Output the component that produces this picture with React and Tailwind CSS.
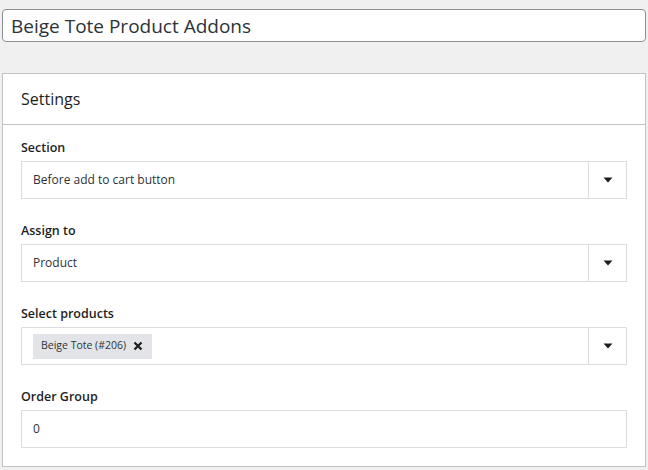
const FIELDS = [
  { label: 'Section', value: 'Before add to cart button', kind: 'select' },
  { label: 'Assign to', value: 'Product', kind: 'select' },
  { label: 'Select products', value: 'Beige Tote (#206)', kind: 'multi' },
  { label: 'Order Group', value: '0', kind: 'input' },
];

function Caret() {
  return (
    <svg width="10" height="6" viewBox="0 0 10 6" className="text-[#1e1e1e]">
      <path d="M0.5 0.5 L9.5 0.5 L5 5.5 Z" fill="currentColor" />
    </svg>
  );
}

function Field({ field }) {
  return (
    <div>
      <label className="block text-[12.5px] leading-[18px] font-semibold text-[#1e1e1e] mb-[4px]">
        {field.label}
      </label>
      <div className="flex h-[38px] border border-[#dcdcde] bg-white">
        <div className="flex-1 flex items-center pl-[11px]">
          {field.kind === 'multi' ? (
            <span className="flex items-center h-[25px] bg-[#e2e4e7] pl-[8px] pr-[9px] text-[10.5px] text-[#2c3338]">
              {field.value}
              <svg width="10" height="10" viewBox="0 0 10 10" className="ml-[7px]">
                <path d="M1.5 1.5 L8.5 8.5 M8.5 1.5 L1.5 8.5" stroke="#1e1e1e" strokeWidth="2.2" />
              </svg>
            </span>
          ) : (
            <span className="text-[12px] text-[#2c3338]">{field.value}</span>
          )}
        </div>
        {field.kind !== 'input' && (
          <div className="w-[38px] border-l border-[#dcdcde] flex items-center justify-center">
            <Caret />
          </div>
        )}
      </div>
    </div>
  );
}

export default function App() {
  return (
    <div
      className="min-h-[470px] bg-[#f0f0f1] px-[2px] pt-[9px] text-[#2c3338]"
      style={{ fontFamily: '"Open Sans", "Noto Sans", sans-serif' }}
    >
      <input
        type="text"
        defaultValue="Beige Tote Product Addons"
        className="block w-full h-[33px] border border-[#8c8f94] rounded-[4px] bg-white px-[8px] text-[19px] text-[#2c3338] outline-none"
      />

      <div className="mt-[31px] bg-white border border-[#c3c4c7]">
        <div className="h-[51px] border-b border-[#c3c4c7] flex items-center px-[18px]">
          <h2 className="text-[16px] text-[#1e1e1e]">Settings</h2>
        </div>
        <div className="px-[18px] pt-[14px] pb-[18px] flex flex-col gap-[23px]">
          {FIELDS.map((f) => (
            <Field key={f.label} field={f} />
          ))}
        </div>
      </div>
    </div>
  );
}
